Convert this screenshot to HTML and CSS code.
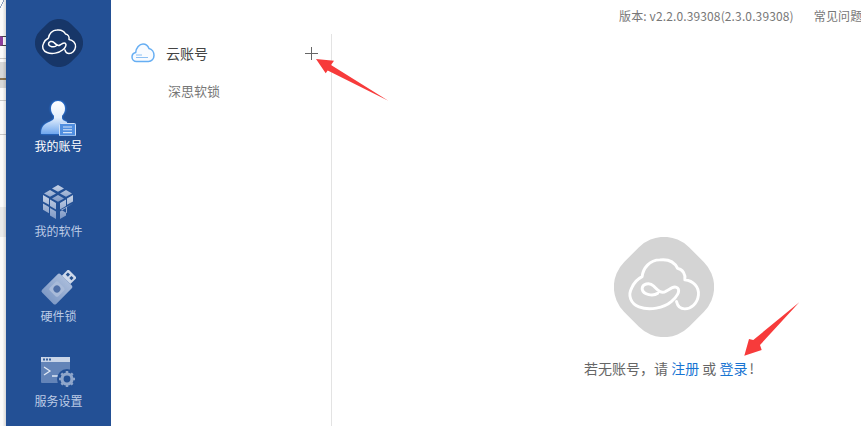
FILE: index.html
```html
<!DOCTYPE html>
<html lang="zh">
<head>
<meta charset="utf-8">
<title>云账号</title>
<link rel="stylesheet" href="styles.css">
</head>
<body>
<div class="app">
  <div class="backdrop">
    <div class="bg-slash"></div>
    <div class="bg-box"></div>
    <div class="bg-line"></div>
    <div class="bg-band"><span></span></div>
    <div class="bg-line bg-line-a"></div>
    <div class="bg-line bg-line-b"></div>
    <div class="bg-pale"></div>
  </div>
  <nav class="sidebar">
    <div class="logo">
      <svg width="48" height="48" viewBox="0 0 48 48">
        <rect class="logo-bg" x="2" y="2" width="44" height="44" rx="17" transform="rotate(45 24 24)"/>
        <path class="logo-line" d="M21 27C19 28.500 14 28 13.500 25 13.500 22.500 17 21.500 19 23.500 21 25.500 22.500 27.500 25 26 27 25 29 23 30.500 24.500 32 26 30 29 27.500 31 24 34 17 35.500 12 33.500 8 32 6.500 28 8.500 24.500 9.500 22 11.500 20 13.500 19 14 15 17 11 22 11 26 10.500 29 12 30.500 15 33 15.500 34.500 18 34 20.500 38 21 41 24 40.500 28 40 32 37 34.500 34 34.500 32 34.500 30.500 33 30 31"/>
      </svg>
    </div>
    <a class="nav-item active">
      <svg class="nav-icon" width="36" height="36" viewBox="0 0 36 36">
        <defs>
          <linearGradient id="g1" x1="0" y1="0" x2="0" y2="1"><stop offset="0" stop-color="#fff"/><stop offset=".5" stop-color="#e4effc"/><stop offset="1" stop-color="#6ea6ee"/></linearGradient>
          <linearGradient id="g2" x1="0" y1="0" x2="0" y2="1"><stop offset="0" stop-color="#c6d2e6"/><stop offset="1" stop-color="#7d97c4"/></linearGradient>
          <linearGradient id="g3" x1="0" y1="0" x2="1" y2="0"><stop offset="0" stop-color="#7f9ac6"/><stop offset="1" stop-color="#a8bbda"/></linearGradient>
          <filter id="glow" x="-30%" y="-30%" width="160%" height="160%"><feGaussianBlur stdDeviation="1.300"/></filter>
        </defs>
        <g class="glow" filter="url(#glow)">
          <ellipse cx="18" cy="8.500" rx="7.500" ry="8"/>
          <path d="M14 15h8v3c0 2 3 3 5 4v12H1c0-6 2-9 6-11 4-2 7-3 7-5Z"/>
        </g>
        <g fill="url(#g1)">
          <path d="M18 1c4 0 7 3.200 7 7.500 0 3-1.200 5.500-3 7.300V18c0 2 3 3 5 4v12H1c0-6 2-9 6-11 4-2 7-3 7-5v-2.200c-1.800-1.800-3-4.300-3-7.300C11 4.200 14 1 18 1Z"/>
        </g>
        <rect x="19.500" y="23.500" width="16" height="12.500" rx="1" fill="#4f8ee0" stroke="#cfe0f7"/>
        <path d="M23 27h9M23 29.800h9M23 32.600h9" stroke="#d5e4f8" stroke-width="1.100"/>
      </svg>
      <span>我的账号</span>
    </a>
    <a class="nav-item">
      <svg class="nav-icon" width="36" height="36" viewBox="0 0 36 36">
        <g fill="url(#g2)">
          <path d="M18 0l6 3.400-6 3.400-6-3.400zM10 5l6 3.400-6 3.400-6-3.400zM26 5l6 3.400-6 3.400-6-3.400zM18 10l6 3.400-6 3.400-6-3.400z"/>
          <path d="M3 10l6 3.400v6.400l-6-3.400zM10 14.500l6 3.400v6.500l-6-3.400zM3 18.500l6 3.400v6.300l-6-3.400zM10 23l6 3.400V34l-6-3.500z"/>
          <path d="M33 10l-6 3.400v6.400l6-3.400zM26 14.500l-6 3.400v6.500l6-3.400zM33 18.500l-6 3.400v6.300l-6-3.400zM26 23l-6 3.400V34l6-3.500z"/>
        </g>
      </svg>
      <span>我的软件</span>
    </a>
    <a class="nav-item">
      <svg class="nav-icon" width="36" height="36" viewBox="0 0 36 36">
        <g transform="rotate(-45 18 18)">
          <rect x="3.500" y="8" width="26" height="20" rx="2" fill="url(#g3)"/>
          <rect x="29.500" y="12" width="9" height="12" fill="#cdd8ea"/>
          <rect x="33" y="14" width="3" height="3" fill="#24508f"/>
          <rect x="33" y="19" width="3" height="3" fill="#24508f"/>
          <rect x="10.500" y="12" width="12" height="12" rx="2" fill="#a9bbd9"/>
          <circle cx="16.500" cy="18" r="3.500" fill="#4f6fa6"/>
        </g>
      </svg>
      <span>硬件锁</span>
    </a>
    <a class="nav-item">
      <svg class="nav-icon" width="36" height="36" viewBox="0 0 36 36">
        <rect x="1" y="2" width="29" height="26" rx="1" fill="#6384b8"/>
        <rect x="1" y="2" width="29" height="5" fill="#c9d5e8"/>
        <path d="M3 3.500h2v2H3zM6 3.500h2v2H6zM9 3.500h2v2H9z" fill="#36609c"/>
        <path d="M4 12l6 4-6 4M12 21h6" fill="none" stroke="#e0e8f4" stroke-width="1.300"/>
        <circle cx="27" cy="24" r="10" fill="#235095"/>
        <circle cx="27" cy="24" r="5" fill="none" stroke="#8fa6cb" stroke-width="3.200"/>
        <path d="M27 16v16M19 24h16M21.300 18.300l11.400 11.400M32.700 18.300L21.300 29.700" stroke="#8fa6cb" stroke-width="2.500" stroke-dasharray="2.500 11"/>
      </svg>
      <span>服务设置</span>
    </a>
  </nav>
  <div class="workspace">
    <header class="topbar">
      <span>版本: v2.2.0.39308(2.3.0.39308)</span>
      <span>常见问题</span>
    </header>
    <div class="panes">
      <aside class="accounts">
        <div class="accounts-head">
          <svg class="cloud" width="24" height="20" viewBox="0 0 24 20">
            <path d="M5.500 18.500C3 18.500 1 16.500 1 14c0-2.300 1.500-4 3.700-4.500C5 5 8.500 1 12 1c3 0 5 2 6 4.500 3 .5 5 3.500 5 7 0 3.500-2.500 6-5.500 6Z" fill="#f8fbff" stroke="#66aef3" stroke-width="1.500"/>
            <path d="M5 12h6M5 14.500h12" stroke="#8cc0f3" stroke-width="1"/>
          </svg>
          <span class="head-label">云账号</span>
          <span class="plus"></span>
        </div>
        <div class="account-item">深思软锁</div>
      </aside>
      <main class="content">
        <svg width="100" height="100" viewBox="0 0 48 48">
          <rect class="empty-bg" x="2" y="2" width="44" height="44" rx="17" transform="rotate(45 24 24)"/>
          <path class="empty-line" d="M21 27C19 28.500 14 28 13.500 25 13.500 22.500 17 21.500 19 23.500 21 25.500 22.500 27.500 25 26 27 25 29 23 30.500 24.500 32 26 30 29 27.500 31 24 34 17 35.500 12 33.500 8 32 6.500 28 8.500 24.500 9.500 22 11.500 20 13.500 19 14 15 17 11 22 11 26 10.500 29 12 30.500 15 33 15.500 34.500 18 34 20.500 38 21 41 24 40.500 28 40 32 37 34.500 34 34.500 32 34.500 30.500 33 30 31"/>
        </svg>
        <p class="empty-text">若无账号<span class="punct">，</span>请 <a>注册</a> 或 <a>登录</a><span class="bang">!</span></p>
      </main>
    </div>
  </div>
  <svg class="arrows" width="861" height="426" viewBox="0 0 861 426">
    <path d="M316 59L334 60.700 331 65 388.300 100.700 327.700 70.500 325.700 73.300Z"/>
    <path d="M799.300 302.300L760 345 761.700 350 744.300 355.700 749 339 753.300 340Z"/>
  </svg>
</div>
</body>
</html>
```
FILE: styles.css
```css
* { box-sizing: border-box; }
html, body { margin: 0; padding: 0; }
body {
  width: 861px;
  height: 426px;
  overflow: hidden;
  background: #fff;
  font-family: "Noto Sans CJK SC", "Liberation Sans", sans-serif;
  font-size: 13px;
}
.app {
  position: relative;
  display: flex;
  width: 861px;
  height: 426px;
  overflow: hidden;
}
.backdrop {
  position: relative;
  width: 6px;
  flex: none;
  overflow: hidden;
  background: #fafafa;
}
.backdrop::after {
  content: "";
  position: absolute;
  inset: 0;
  background: linear-gradient(90deg, rgba(0,0,0,0) 40%, rgba(0,0,0,.14) 100%);
}
.bg-slash {
  height: 36px;
  background: linear-gradient(115deg, transparent 0, transparent 3px, #8ea2c0 3px, #8ea2c0 4px, transparent 4px) 0 0 / 6px 14px no-repeat;
}
.bg-box {
  height: 10px;
  background: #fff;
  border-top: 1px solid #444;
  border-bottom: 1px solid #444;
  border-left: 3px solid #8d3f9c;
}
.bg-line { height: 1px; margin-top: 12px; background: #c8c8c8; }
.bg-band {
  height: 26px;
  margin-top: 3px;
  padding-top: 16px;
  background: #d8d8d8;
}
.bg-band span { display: block; height: 2px; background: #8a7350; }
.bg-line-a { margin-top: 12px; }
.bg-line-b { margin-top: 33px; }
.bg-pale { height: 30px; margin-top: 72px; background: #eaeaea; }
.sidebar {
  width: 105px;
  flex: none;
  background: #235095;
  display: flex;
  flex-direction: column;
  align-items: center;
  padding-top: 19px;
}
.logo { flex: none; height: 48px; margin-bottom: 33px; }
.logo svg { display: block; }
.logo-bg { fill: #173668; }
.logo-line { fill: none; stroke: #fff; stroke-width: 1.500; stroke-linecap: round; stroke-linejoin: round; }
.nav-item {
  flex: none;
  display: flex;
  flex-direction: column;
  align-items: center;
  height: 85px;
  color: #bccbe5;
  font-size: 12px;
  line-height: 18px;
}
.nav-item.active { color: #fff; }
.nav-icon { display: block; margin-bottom: 1px; }
.glow { fill: #2f86f8; }
.workspace { flex: none; width: 885px; display: flex; flex-direction: column; }
.topbar {
  flex: none;
  height: 34px;
  display: flex;
  gap: 20px;
  padding: 6px 0 0 508px;
  font-size: 12px;
  line-height: 20px;
  letter-spacing: .13px;
  color: #777;
  white-space: nowrap;
}
.panes { flex: 1; display: flex; min-height: 0; }
.accounts {
  width: 221px;
  flex: none;
  border-right: 1px solid #e3e3e3;
}
.accounts-head {
  display: flex;
  align-items: center;
  height: 24px;
  margin-top: 7px;
  padding: 0 13px 0 20px;
}
.cloud { display: block; }
.head-label { margin-left: 11px; font-size: 14px; color: #444; }
.plus {
  margin-left: auto;
  width: 13px;
  height: 13px;
  background:
    linear-gradient(#666, #666) center / 13px 1px no-repeat,
    linear-gradient(#666, #666) center / 1px 13px no-repeat;
}
.account-item {
  margin-top: 16px;
  padding-left: 57px;
  font-size: 13px;
  line-height: 20px;
  color: #777;
}
.content {
  flex: 1;
  min-width: 0;
  display: flex;
  flex-direction: column;
  align-items: center;
  padding-top: 203px;
}
.content svg { display: block; flex: none; }
.empty-bg { fill: #d4d4d4; }
.empty-line { fill: none; stroke: #fff; stroke-width: 1.400; stroke-linecap: round; stroke-linejoin: round; }
.empty-text { margin: 21px 0 0 10px; font-size: 14px; line-height: 20px; color: #666; white-space: nowrap; }
.empty-text a { color: #1874d2; }
.punct { font-family: "Noto Sans CJK TC", sans-serif; }
.bang { margin-left: 2px; }
.arrows { position: absolute; left: 0; top: 0; pointer-events: none; }
.arrows path { fill: #f73b3b; }
```
